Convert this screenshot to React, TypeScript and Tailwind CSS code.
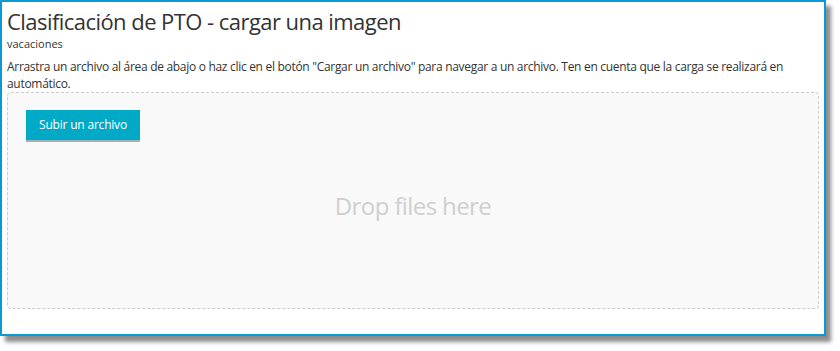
export default function App() {
    return (
        <main className="w-[840px] h-[351px] bg-white font-['Open_Sans',sans-serif] text-[#333]">
            {/* Window frame with shadow */}
            <div className="w-[826px] h-[336px] border-2 border-[#0a99d8] bg-white shadow-[5px_6px_4px_rgba(0,0,0,0.45)] flex flex-col px-[5px]">
                <h1 className="text-[22px] leading-[26px] mt-[6px] tracking-[-0.55px]">
                    Clasificación de PTO - cargar una imagen
                </h1>
                <p className="text-[11px] leading-[14px] mt-[3px]">vacaciones</p>
                <p className="text-[12px] leading-[17px] mt-[7px] tracking-[-0.3px]">
                    Arrastra un archivo al área de abajo o haz clic en el botón "Cargar un archivo" para navegar a un archivo. Ten en cuenta que la carga se realizará en automático.
                </p>

                {/* Drop zone */}
                <div className="w-[812px] h-[217px] border border-dashed border-[#cccccc] rounded-[4px] bg-[#f9f9f9] flex flex-col px-[18px] pt-[17px]">
                    <button className="self-start w-[114px] h-[32px] bg-[#00aac7] text-white text-[12px] tracking-[-0.2px] border-b-2 border-[#9fb3b8]">
                        Subir un archivo
                    </button>
                    <div className="flex-1 flex items-center justify-center pb-[38px] text-[24px] tracking-[-0.6px] text-[#cfcfcf]">
                        Drop files here
                    </div>
                </div>
            </div>
        </main>
    );
}
